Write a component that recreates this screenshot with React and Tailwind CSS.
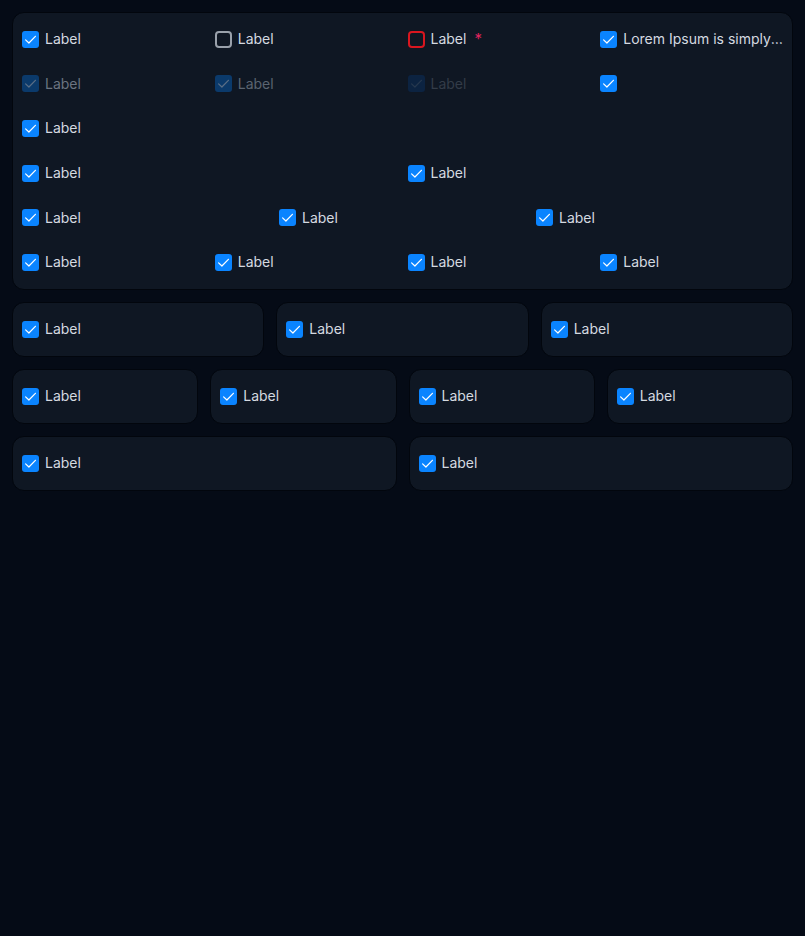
import React from "react";

const Check = ({ color = "#ffffff" }) => (
  <svg width="17" height="17" viewBox="0 0 17 17" fill="none">
    <path d="M3.6 8.9 L6.9 12 L13.4 5.3" stroke={color} strokeWidth="1.2" strokeLinecap="round" strokeLinejoin="round" />
  </svg>
);

function Box({ variant = "checked" }) {
  if (variant === "checked")
    return (
      <span className="w-[17px] h-[17px] rounded-[3px] bg-[#0a84ff] flex items-center justify-center shrink-0">
        <Check />
      </span>
    );
  if (variant === "dis1")
    return (
      <span className="w-[17px] h-[17px] rounded-[3px] bg-[#0b3a6b] flex items-center justify-center shrink-0">
        <Check color="#5b6f86" />
      </span>
    );
  if (variant === "dis2")
    return (
      <span className="w-[17px] h-[17px] rounded-[3px] bg-[#0c2341] flex items-center justify-center shrink-0">
        <Check color="#26384e" />
      </span>
    );
  if (variant === "error")
    return <span className="w-[17px] h-[17px] rounded-[4px] border-2 border-[#d9161f] shrink-0" />;
  return <span className="w-[17px] h-[17px] rounded-[4px] border-2 border-[#9aa1ab] shrink-0" />;
}

function Item({ variant = "checked", label = "Label", textClass = "text-[#d5dae0]", extra = null }) {
  return (
    <div className="flex items-center gap-[6px] min-w-0 pl-[5px] pr-[4px]">
      <Box variant={variant} />
      {label && <span className={"truncate text-[14px] leading-5 " + textClass}>{label}</span>}
      {extra}
    </div>
  );
}

const Row = ({ cols, children }) => (
  <div className={"grid h-[44.6px] items-center " + cols}>{children}</div>
);

function Card({ children }) {
  return (
    <div className="h-[55px] rounded-[12px] border border-[#02060d] bg-[#0f1723] flex items-center pl-[4px]">
      {children}
    </div>
  );
}

export default function App() {
  return (
    <div
      className="min-h-[936px] w-full bg-[#050b16] p-[12px] flex flex-col gap-[12px]"
      style={{ fontFamily: "Inter, Roboto, 'Liberation Sans', sans-serif" }}
    >
      <div className="rounded-[12px] border border-[#02060d] bg-[#0f1723] px-[4px] pt-[4px] pb-[4px]">
        <Row cols="grid-cols-4">
          <Item />
          <Item variant="unchecked" />
          <Item
            variant="error"
            extra={<span className="text-[#e0245e] text-[15px] ml-[2px] leading-5">*</span>}
          />
          <Item label="Lorem Ipsum is simply dummy text of the printing" />
        </Row>
        <Row cols="grid-cols-4">
          <Item variant="dis1" textClass="text-[#6b7480]" />
          <Item variant="dis1" textClass="text-[#5b6470]" />
          <Item variant="dis2" textClass="text-[#333c48]" />
          <Item label="" />
        </Row>
        <Row cols="grid-cols-1">
          <Item />
        </Row>
        <Row cols="grid-cols-2">
          <Item />
          <Item />
        </Row>
        <Row cols="grid-cols-3">
          <Item />
          <Item />
          <Item />
        </Row>
        <Row cols="grid-cols-4">
          <Item />
          <Item />
          <Item />
          <Item />
        </Row>
      </div>

      <div className="grid grid-cols-3 gap-[12px]">
        <Card><Item /></Card>
        <Card><Item /></Card>
        <Card><Item /></Card>
      </div>
      <div className="grid grid-cols-4 gap-[12px]">
        <Card><Item /></Card>
        <Card><Item /></Card>
        <Card><Item /></Card>
        <Card><Item /></Card>
      </div>
      <div className="grid grid-cols-2 gap-[12px]">
        <Card><Item /></Card>
        <Card><Item /></Card>
      </div>
    </div>
  );
}
